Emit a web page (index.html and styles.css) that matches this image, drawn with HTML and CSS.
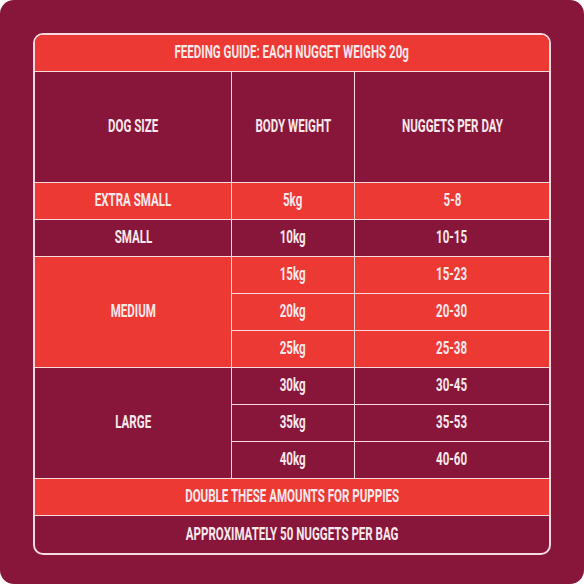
FILE: index.html
```html
<!DOCTYPE html>
<html lang="en">
  <head>
    <meta charset="UTF-8" />
    <meta name="viewport" content="width=device-width, initial-scale=1.0" />
    <title>Feeding Guide</title>
    <link rel="stylesheet" href="styles.css">
  </head>
  <body>
    <div class="card">
      <div class="guide">
        <table>
          <colgroup>
            <col class="col-size" />
            <col class="col-weight" />
            <col />
          </colgroup>
          <tr class="red">
            <td colspan="3"><span>FEEDING GUIDE: EACH NUGGET WEIGHS 20g</span></td>
          </tr>
          <tr class="head">
            <td><span>DOG SIZE</span></td>
            <td><span>BODY WEIGHT</span></td>
            <td><span>NUGGETS PER DAY</span></td>
          </tr>
          <tr class="red">
            <td><span>EXTRA SMALL</span></td>
            <td><span>5kg</span></td>
            <td><span>5-8</span></td>
          </tr>
          <tr>
            <td><span>SMALL</span></td>
            <td><span>10kg</span></td>
            <td><span>10-15</span></td>
          </tr>
          <tr class="red">
            <td rowspan="3"><span>MEDIUM</span></td>
            <td><span>15kg</span></td>
            <td><span>15-23</span></td>
          </tr>
          <tr class="red">
            <td><span>20kg</span></td>
            <td><span>20-30</span></td>
          </tr>
          <tr class="red">
            <td><span>25kg</span></td>
            <td><span>25-38</span></td>
          </tr>
          <tr>
            <td rowspan="3"><span>LARGE</span></td>
            <td><span>30kg</span></td>
            <td><span>30-45</span></td>
          </tr>
          <tr>
            <td><span>35kg</span></td>
            <td><span>35-53</span></td>
          </tr>
          <tr>
            <td><span>40kg</span></td>
            <td><span>40-60</span></td>
          </tr>
          <tr class="red">
            <td colspan="3"><span>DOUBLE THESE AMOUNTS FOR PUPPIES</span></td>
          </tr>
          <tr class="last">
            <td colspan="3"><span>APPROXIMATELY 50 NUGGETS PER BAG</span></td>
          </tr>
        </table>
      </div>
    </div>
  </body>
</html>
```

FILE: styles.css
```css
* {
  box-sizing: border-box;
  margin: 0;
  padding: 0;
}
body {
  background-color: #ffffff;
  font-family: Roboto, "DejaVu Sans Condensed", sans-serif;
}
.card {
  width: 584px;
  height: 584px;
  padding: 33px;
  background-color: #87163a;
  border-radius: 14px;
}
.guide {
  border: 2px solid #f7d9de;
  border-radius: 10px;
  overflow: hidden;
}
table {
  width: 100%;
  border-spacing: 0;
  table-layout: fixed;
}
.col-size {
  width: 197px;
}
.col-weight {
  width: 123px;
}
td {
  height: 37px;
  text-align: center;
  vertical-align: middle;
  color: #f8e8ec;
  font-size: 17.5px;
  font-weight: bold;
  line-height: 1;
  white-space: nowrap;
  border-right: 1.5px solid #f7d9de;
  border-bottom: 1.5px solid #f7d9de;
}
td span {
  display: inline-block;
  transform: scaleX(0.66);
}
td:last-child {
  border-right: none;
}
td[rowspan] {
  border-right: 1.5px solid #f7d9de;
}
.last td {
  border-bottom: none;
}
.red td {
  background-color: #ec3933;
}
.head td {
  height: 111px;
}
```
